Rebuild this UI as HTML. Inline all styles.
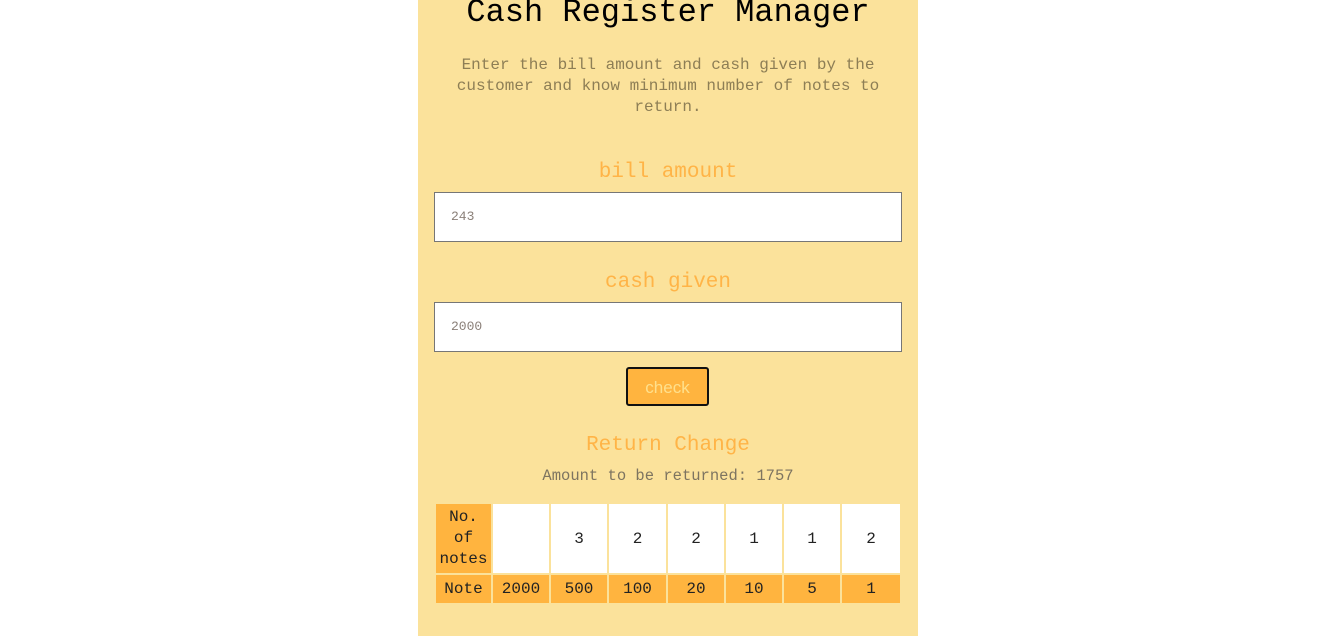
<!DOCTYPE html>
<html><head><meta charset="utf-8"><style>
html,body{margin:0;padding:0;background:#fff;width:1328px;height:636px;overflow:hidden}
body{font-family:"Liberation Mono","DejaVu Sans Mono",monospace;position:relative}
.main{position:absolute;left:418px;top:0;width:500px;height:636px;background:#fbe29b}
.a{position:absolute;left:0;width:500px;text-align:center;white-space:nowrap}
h1{margin:0;font-weight:normal;font-size:32px;color:#000;top:-9px;line-height:44px}
.sub{font-size:16px;line-height:21px;color:#8d7e55;top:55px;width:440px;left:30px;white-space:normal}
.lab{font-size:21px;color:#ffb447;line-height:26px}
.in{position:absolute;left:16px;width:466px;height:48px;background:#fff;border:1px solid #767676;font-size:13px;color:#8a7f78;line-height:48px;box-sizing:content-box}
.in span{position:absolute;left:16px}
.btn{position:absolute;left:208px;top:367px;width:79px;height:35px;background:#ffb43f;border:2px solid #111;border-radius:3px;font-family:"Liberation Sans",sans-serif;font-size:17px;color:#ffe08c;text-align:center;line-height:37px}
table{position:absolute;left:16px;top:502px;border-collapse:separate;border-spacing:2px;font-size:16px;color:#222}
td{text-align:center;padding:0}
.o{background:#ffb43f}
.w{background:#fff}
</style></head><body>
<div class="main">
<h1 class="a">Cash Register Manager</h1>
<div class="a sub">Enter the bill amount and cash given by the customer and know minimum number of notes to return.</div>
<div class="a lab" style="top:160px">bill amount</div>
<div class="in" style="top:192px"><span>243</span></div>
<div class="a lab" style="top:270px">cash given</div>
<div class="in" style="top:302px"><span>2000</span></div>
<div class="btn">check</div>
<div class="a lab" style="top:433px">Return Change</div>
<div class="a" style="top:466px;font-size:15.5px;color:#7d7460;line-height:20px">Amount to be returned: 1757</div>
<table>
<tr style="height:69px"><td class="o" style="width:55px;line-height:21px">No.<br>of<br>notes</td><td class="w" style="width:56px"></td><td class="w" style="width:56px">3</td><td class="w" style="width:57px">2</td><td class="w" style="width:56px">2</td><td class="w" style="width:56px">1</td><td class="w" style="width:56px">1</td><td class="w" style="width:58px">2</td></tr>
<tr style="height:28px"><td class="o">Note</td><td class="o">2000</td><td class="o">500</td><td class="o">100</td><td class="o">20</td><td class="o">10</td><td class="o">5</td><td class="o">1</td></tr>
</table>
</div>
</body></html>
